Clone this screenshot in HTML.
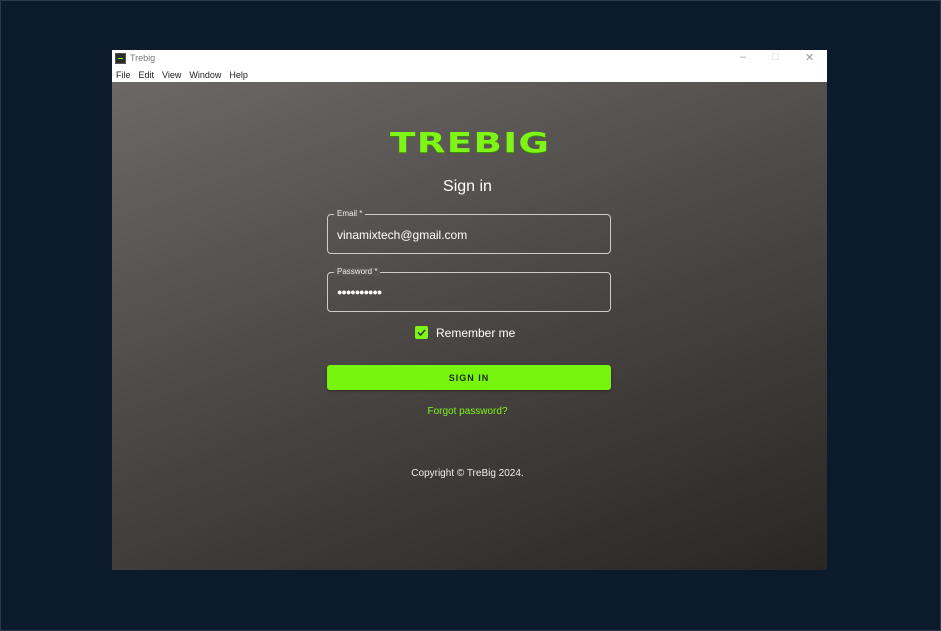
<!DOCTYPE html>
<html><head><style>
*{margin:0;padding:0;box-sizing:border-box}
body{width:941px;height:631px;background:#0b1b2b;position:relative;overflow:hidden;font-family:"Liberation Sans",sans-serif;box-shadow:inset 0 0 0 1px #2a3a4a}
.win{position:absolute;left:112px;top:50px;width:715px;height:520px;background:#fff;}
.title{height:18px;position:relative;font-size:9px;color:#777}
.title .ic{position:absolute;left:3px;top:3px;width:11px;height:11px;background:#2a2a2a;border:1px solid #555}
.title .ic:after{content:"";position:absolute;left:2px;top:4px;width:5px;height:1px;background:#7f0}
.title span{position:absolute;left:18px;top:3px}
.menu{height:14px;font-size:9px;color:#222;padding-left:4px;line-height:14px}
.menu span{margin-right:8px}
.ctl{position:absolute;top:1px;font-size:11px;color:#999}
.content{position:absolute;top:32px;left:0;width:715px;height:488px;background:linear-gradient(160deg,#6c6867 0%,#4d4947 45%,#2a2625 100%)}
.logo{position:absolute;left:278px;top:44px;font-family:"DejaVu Sans",sans-serif;font-weight:bold;font-size:28px;color:#7ef516;letter-spacing:1px;transform:scaleX(1.33);transform-origin:left;text-shadow:0 1px 0 #3a8a00}
.h{position:absolute;left:-2px;width:715px;text-align:center;color:#fff}
.field{position:absolute;left:215px;width:284px;height:40px;border:1px solid #ccc;border-radius:4px}
.field label{position:absolute;left:6px;top:-6px;font-size:8px;color:#eee;background:#555150;padding:0 3px}
.field .v{position:absolute;left:9px;top:13px;font-size:12px;color:#fff}
.cb{position:absolute;left:303px;top:244px;width:13px;height:13px;background:#7ef516;border-radius:2px}
.btn{position:absolute;left:215px;top:283px;width:284px;height:25px;background:#78f50f;border-radius:3px;text-align:center;line-height:26px;font-size:9px;font-weight:bold;letter-spacing:1px;color:#1a2a10;box-shadow:0 1px 2px rgba(0,0,0,.4)}
</style></head><body>
<div class="win">
<div class="title"><div class="ic"></div><span>Trebig</span>
<div class="ctl" style="left:628px">–</div><div class="ctl" style="left:660px;color:#ccc">□</div><div class="ctl" style="left:693px">✕</div></div>
<div class="menu"><span>File</span><span>Edit</span><span>View</span><span>Window</span><span>Help</span></div>
<div class="content">
<div class="logo">TREBIG</div>
<div class="h" style="top:96px;font-size:16px">Sign in</div>
<div class="field" style="top:132px;background:transparent"><label style="background:#5a5655">Email *</label><div class="v">vinamixtech@gmail.com</div></div>
<div class="field" style="top:190px"><label style="background:#575352">Password *</label><div class="v" style="font-size:9px;top:14px;letter-spacing:-1px">●●●●●●●●●●</div></div>
<div class="cb"><svg width="13" height="13" viewBox="0 0 13 13"><path d="M3 6.5l2.5 2.5 4.5-5" stroke="#333" stroke-width="1.5" fill="none"/></svg></div>
<div style="position:absolute;left:324px;top:244px;font-size:12px;color:#fff">Remember me</div>
<div class="btn">SIGN IN</div>
<div class="h" style="top:324px;font-size:10px;color:#7ef516">Forgot password?</div>
<div class="h" style="top:386px;font-size:10px;color:#eee">Copyright © TreBig 2024.</div>
</div></div>
</body></html>
